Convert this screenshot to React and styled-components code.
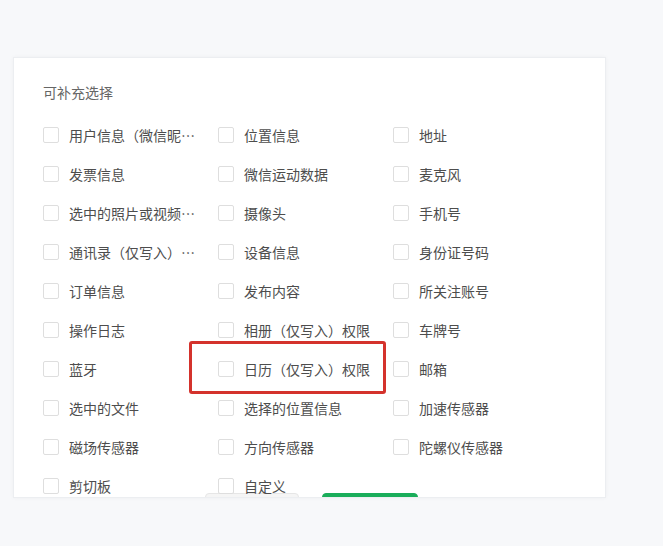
import React from 'react';
import styled, { createGlobalStyle } from 'styled-components';

const GlobalStyle = createGlobalStyle`
	html, body {
		margin: 0;
		padding: 0;
		background: #f7f8fa;
		font-family: "Noto Sans CJK SC", "Noto Sans", sans-serif;
	}
`;

const Page = styled.div`
	width: 663px;
	height: 546px;
	padding: 57px 0 0 13px;
	box-sizing: border-box;
	background: #f7f8fa;
`;

const Card = styled.div`
	position: relative;
	width: 593px;
	height: 441px;
	box-sizing: border-box;
	background: #fff;
	border: 1px solid #eceef1;
	box-shadow: 0 0 4px rgba(0, 0, 0, 0.04);
	overflow: hidden;
	padding: 24px 0 0 29px;
`;

const Title = styled.div`
	font-size: 14px;
	line-height: 20px;
	color: #666;
	margin-bottom: 25px;
`;

const Grid = styled.div`
	display: grid;
	grid-template-columns: repeat(3, 175px);
	grid-auto-rows: 16px;
	row-gap: 23px;
`;

const Item = styled.label`
	position: relative;
	display: flex;
	align-items: center;
	gap: 10px;
	height: 16px;

	${({ $marked }) =>
		$marked &&
		`
		&::after {
			content: '';
			position: absolute;
			left: -29px;
			top: -20px;
			width: 197px;
			height: 53px;
			box-sizing: border-box;
			border: 3px solid #d4322c;
			border-radius: 3px;
		}
	`}
`;

const Box = styled.span`
	flex: none;
	width: 16px;
	height: 16px;
	box-sizing: border-box;
	border: 1px solid #dedede;
	border-radius: 2px;
	background: #fff;
`;

const Label = styled.span`
	max-width: 130px;
	font-size: 14px;
	line-height: 20px;
	color: #4d4d4d;
	white-space: nowrap;
	overflow: hidden;
	text-overflow: ellipsis;
`;

const Footer = styled.div`
	display: flex;
	justify-content: center;
	gap: 23px;
	padding-left: 4px;
	margin-top: -1px;
	margin-left: -29px;
`;

const Button = styled.button`
	width: ${({ $primary }) => ($primary ? '96px' : '94px')};
	height: 32px;
	border-radius: 4px;
	font-family: inherit;
	font-size: 14px;
	border: 1px solid ${({ $primary }) => ($primary ? '#1aad5a' : '#e6e6e6')};
	background: ${({ $primary }) => ($primary ? '#1aad5a' : '#f5f5f5')};
	color: ${({ $primary }) => ($primary ? '#fff' : '#333')};
`;

const options = [
	'用户信息（微信昵称、头像）',
	'位置信息',
	'地址',
	'发票信息',
	'微信运动数据',
	'麦克风',
	'选中的照片或视频信息',
	'摄像头',
	'手机号',
	'通讯录（仅写入）权限',
	'设备信息',
	'身份证号码',
	'订单信息',
	'发布内容',
	'所关注账号',
	'操作日志',
	'相册（仅写入）权限',
	'车牌号',
	'蓝牙',
	'日历（仅写入）权限',
	'邮箱',
	'选中的文件',
	'选择的位置信息',
	'加速传感器',
	'磁场传感器',
	'方向传感器',
	'陀螺仪传感器',
	'剪切板',
	'自定义',
];

export default function App() {
	return (
		<>
			<GlobalStyle />
			<Page>
				<Card>
					<Title>可补充选择</Title>
					<Grid>
						{options.map((text) => (
							<Item key={text} $marked={text === '日历（仅写入）权限'}>
								<Box />
								<Label>{text}</Label>
							</Item>
						))}
					</Grid>
					<Footer>
						<Button>取消</Button>
						<Button $primary>确定</Button>
					</Footer>
				</Card>
			</Page>
		</>
	);
}
